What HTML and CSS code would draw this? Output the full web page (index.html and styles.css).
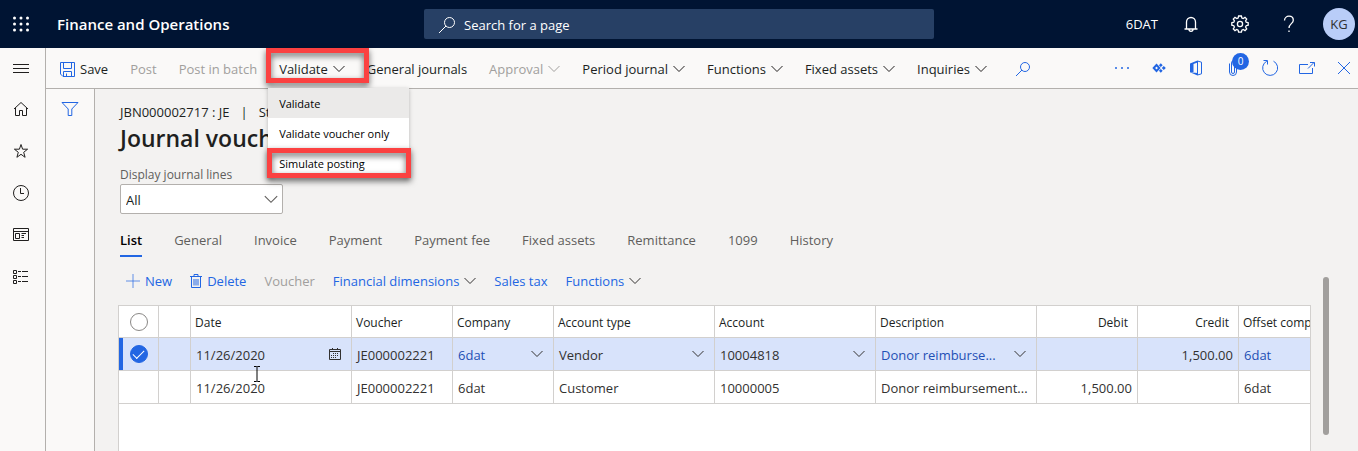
FILE: index.html
```html
<!DOCTYPE html>
<html lang="en">
<head>
<meta charset="utf-8">
<title>Journal voucher - Finance and Operations</title>
<link rel="stylesheet" href="styles.css">
</head>
<body>
<svg class="sprite" aria-hidden="true">
  <symbol id="chevron" viewBox="0 0 12 8"><path d="M.5 1 6 6.5 11.500 1"/></symbol>
</svg>

<header class="topbar">
  <div class="brand">
    <button class="icon-btn" aria-label="App launcher">
      <svg class="dots" width="16" height="16" viewBox="0 0 16 16"><circle cx="1.500" cy="2" r="1.500"/><circle cx="8" cy="2" r="1.500"/><circle cx="14.500" cy="2" r="1.500"/><circle cx="1.500" cy="8" r="1.500"/><circle cx="8" cy="8" r="1.500"/><circle cx="14.500" cy="8" r="1.500"/><circle cx="1.500" cy="14" r="1.500"/><circle cx="8" cy="14" r="1.500"/><circle cx="14.500" cy="14" r="1.500"/></svg>
    </button>
    <span class="brand-name">Finance and Operations</span>
  </div>
  <label class="search">
    <svg class="line" width="18" height="18" viewBox="0 0 18 18"><circle cx="11.500" cy="6.500" r="5"/><path d="M8 10 1 17"/></svg>
    <input type="search" placeholder="Search for a page" aria-label="Search for a page">
  </label>
  <div class="account">
    <span class="company">6DAT</span>
    <button class="icon-btn" aria-label="Notifications"><svg class="line strong" width="14" height="16" viewBox="0 0 14 16"><path d="M2.500 13V6a4.500 4.500 0 0 1 9 0v7M.5 13h13M5 13.500a2 1.800 0 0 0 4 0"/></svg></button>
    <button class="icon-btn" aria-label="Settings"><svg class="line strong" width="18" height="18" viewBox="0 0 18 18"><path d="m7.600 1 2.800 0 .5 2 1.300.5 1.800-1.100 1.700 1.700-1.100 1.800.6 1.300 2 .5v2.500l-2 .5-.6 1.300 1.100 1.900-1.700 1.700-1.800-1.100-1.300.6-.5 2H7.600l-.5-2-1.300-.6L4 15.600l-1.700-1.700 1.100-1.900-.6-1.300-2-.5V7.700l2-.5.6-1.300-1.100-1.800L4 2.400l1.800 1.100L7.100 3z"/><circle cx="9" cy="9" r="2.600"/></svg></button>
    <button class="icon-btn" aria-label="Help"><svg class="line strong" width="12" height="18" viewBox="0 0 12 18"><path d="M1.500 5.500A4.500 4.500 0 0 1 6 1.200c2.600 0 4.300 1.700 4.300 4C10.300 8.600 6 8.800 6 13M6 15.500v1.500"/></svg></button>
    <button class="avatar" aria-label="Account KG">KG</button>
  </div>
</header>

<div class="shell">
  <nav class="rail" aria-label="Navigation">
    <button class="icon-btn" aria-label="Expand navigation"><svg class="line" width="16" height="12" viewBox="0 0 16 12"><path d="M0 2.500h16M0 6.500h16M0 10.500h16"/></svg></button>
    <button class="icon-btn" aria-label="Home"><svg class="line" width="16" height="16" viewBox="0 0 16 16"><path d="M1 8 8 1.500 15 8M2.500 7v7.500h4v-5h3v5h4V7"/></svg></button>
    <button class="icon-btn" aria-label="Favorites"><svg class="line" width="16" height="16" viewBox="0 0 16 16"><path d="m8 1.500 1.600 4.700h5L10.700 9.300l1.400 5L8 11.300 3.900 14.300l1.400-5L1.400 6.200h5z"/></svg></button>
    <button class="icon-btn" aria-label="Recent"><svg class="line" width="16" height="16" viewBox="0 0 16 16"><circle cx="8" cy="8" r="7.500"/><path d="M7.500 3v5.500H11"/></svg></button>
    <button class="icon-btn" aria-label="Workspaces"><svg class="line" width="16" height="14" viewBox="0 0 16 14"><path d="M.5.500h15v12H.5zM.5 3.500h15M2.500 5.500h4v5h-4zM8.500 5.500H13M8.500 7.500H11M8.500 9.500H11"/></svg></button>
    <button class="icon-btn" aria-label="Modules"><svg class="line" width="16" height="14" viewBox="0 0 16 14"><path d="M.5.500h3v3h-3zM.5 5.500h3v3h-3zM.5 10.500h3v3h-3zM5 1.500h3M9 1.500h6M5 6.500h3M9 6.500h6M5 11.500h3M9 11.500h6"/></svg></button>
  </nav>

  <div class="workspace">
    <div class="toolbar" role="toolbar" aria-label="Actions">
      <button class="cmd"><svg class="line blue" width="15" height="15" viewBox="0 0 15 15"><path d="M.5.500h14v14H3L.5 12zM3.500.500v6h8v-6M3.500 14.500V9.500h8v5M6.500 11.500v3"/></svg>Save</button>
      <button class="cmd" disabled>Post</button>
      <button class="cmd" disabled>Post in batch</button>
      <div class="menu-host">
        <button class="cmd" aria-expanded="true">Validate<svg class="chev"><use href="#chevron"/></svg></button>
        <div class="callout callout-cmd"></div>
        <div class="menu" role="menu">
          <button class="menu-item current" role="menuitem">Validate</button>
          <button class="menu-item" role="menuitem">Validate voucher only</button>
          <button class="menu-item" role="menuitem">Simulate posting</button>
          <div class="callout callout-item"></div>
        </div>
      </div>
      <button class="cmd">General journals</button>
      <button class="cmd" disabled>Approval<svg class="chev"><use href="#chevron"/></svg></button>
      <button class="cmd">Period journal<svg class="chev"><use href="#chevron"/></svg></button>
      <button class="cmd">Functions<svg class="chev"><use href="#chevron"/></svg></button>
      <button class="cmd">Fixed assets<svg class="chev"><use href="#chevron"/></svg></button>
      <button class="cmd">Inquiries<svg class="chev"><use href="#chevron"/></svg></button>
      <button class="cmd find" aria-label="Find action"><svg class="line blue" width="16" height="16" viewBox="0 0 16 16"><circle cx="10" cy="6" r="4.500"/><path d="M7 9 1 15"/></svg></button>
      <div class="tools">
        <button class="icon-btn" aria-label="More"><svg class="dots blue" width="16" height="16" viewBox="0 0 16 16"><circle cx="2" cy="8" r="1"/><circle cx="8" cy="8" r="1"/><circle cx="14" cy="8" r="1"/></svg></button>
        <button class="icon-btn" aria-label="Power Apps"><svg class="line blue thick" width="14" height="10" viewBox="0 0 14 10"><path d="m4.500 2 2.800 3-2.800 3-2.800-3z"/><path class="solid" d="m8.800.3 1.900 1.900-1.900 1.900-1.900-1.900zM8.800 5.900l1.900 1.900-1.900 1.900-1.900-1.900zM11.800 3 13.800 5l-2 2-2-2z"/></svg></button>
        <button class="icon-btn" aria-label="Open in Office"><svg class="line blue" width="14" height="16" viewBox="0 0 14 16"><path d="M8.500 1 12.500 2.200v11.600L8.500 15"/><path class="solid" d="M8.500.500v2L4.500 4v8L1 12.500V3.500zM1 12.300l7.500.7v2.500z"/><path d="M8.500 1v14"/></svg></button>
        <button class="icon-btn" aria-label="Attachments, 0"><svg class="line blue" width="11" height="18" viewBox="0 0 11 18"><path d="M8.500 4v9a3.500 3.500 0 0 1-7 0V4.500M6.500 5v8a1.500 1.500 0 0 1-3 0V4a2.500 2.500 0 0 1 5 0"/></svg><span class="badge">0</span></button>
        <button class="icon-btn" aria-label="Refresh"><svg class="line blue" width="18" height="18" viewBox="0 0 18 18"><path d="M5.800 2.200a7.500 7.500 0 1 0 6.700 0M2.500 1.500h4v4"/></svg></button>
        <button class="icon-btn" aria-label="Open in new window"><svg class="line blue" width="16" height="14" viewBox="0 0 16 14"><path d="M9 3.500H.5v9h13V7M9 7.500l6-6M11 1.500h4.500v4"/></svg></button>
        <button class="icon-btn" aria-label="Close"><svg class="line blue" width="14" height="14" viewBox="0 0 14 14"><path d="m1 1 12 12M13 1 1 13"/></svg></button>
      </div>
    </div>

    <div class="body">
      <aside class="filter-pane">
        <button class="icon-btn" aria-label="Show filters"><svg class="line blue" width="18" height="16" viewBox="0 0 18 16"><path d="M1 1.500h16L10.800 8v6.500H7.200V8z"/></svg></button>
      </aside>
      <main class="page">
        <div class="content">
          <div class="crumbs"><span>JBN000002717 : JE</span><span>|</span><span>Standard view</span></div>
          <h1>Journal voucher</h1>
          <label class="field-label" for="lines">Display journal lines</label>
          <div class="select-box">
            <select id="lines"><option>All</option></select>
            <svg class="chev large"><use href="#chevron"/></svg>
          </div>
          <div class="tabs" role="tablist">
            <button class="tab active" role="tab" aria-selected="true">List</button>
            <button class="tab" role="tab">General</button>
            <button class="tab" role="tab">Invoice</button>
            <button class="tab" role="tab">Payment</button>
            <button class="tab" role="tab">Payment fee</button>
            <button class="tab" role="tab">Fixed assets</button>
            <button class="tab" role="tab">Remittance</button>
            <button class="tab" role="tab">1099</button>
            <button class="tab" role="tab">History</button>
          </div>
          <div class="actions">
            <button class="cmd link"><svg class="line blue thin" width="14" height="14" viewBox="0 0 14 14"><path d="M7 0v14M0 7h14"/></svg>New</button>
            <button class="cmd link"><svg class="line blue" width="12" height="14" viewBox="0 0 12 14"><path d="M0 2.500h12M4 2.500v-2h4v2M1.500 2.500v11h9v-11M4 5v6.500M6 5v6.500M8 5v6.500"/></svg>Delete</button>
            <button class="cmd" disabled>Voucher</button>
            <button class="cmd link">Financial dimensions<svg class="chev"><use href="#chevron"/></svg></button>
            <button class="cmd link">Sales tax</button>
            <button class="cmd link">Functions<svg class="chev"><use href="#chevron"/></svg></button>
          </div>
          <div class="grid">
            <table>
              <colgroup><col class="c-check"><col class="c-mark"><col class="c-wide"><col class="c-mid"><col class="c-mid"><col class="c-wide"><col class="c-wide"><col class="c-wide"><col class="c-mid"><col class="c-mid"><col class="c-mid"></colgroup>
              <thead>
                <tr>
                  <th class="check"><input type="checkbox" aria-label="Select all rows"></th>
                  <th></th><th>Date</th><th>Voucher</th><th>Company</th><th>Account type</th><th>Account</th><th>Description</th><th class="num">Debit</th><th class="num">Credit</th><th>Offset company</th>
                </tr>
              </thead>
              <tbody>
                <tr class="selected">
                  <td class="check"><input type="checkbox" checked aria-label="Select row 1"></td>
                  <td></td>
                  <td><div class="cell"><span>11/26/2020</span><button class="cell-btn calendar" aria-label="Pick a date"><svg class="line" width="12" height="12" viewBox="0 0 12 12"><path d="M.5 1.500h11v10H.5zM0 3.500h12M3.500 0v2M8.500 0v2"/><path class="days" d="M4 5.500h6M2 7.500h8M2 9.500h6"/></svg></button></div></td>
                  <td>JE000002221</td>
                  <td><div class="cell"><a href="#">6dat</a><button class="cell-btn" aria-label="Open company list"><svg class="chev"><use href="#chevron"/></svg></button></div></td>
                  <td><div class="cell"><span>Vendor</span><button class="cell-btn" aria-label="Open account type list"><svg class="chev"><use href="#chevron"/></svg></button></div></td>
                  <td><div class="cell"><span>10004818</span><button class="cell-btn" aria-label="Open account list"><svg class="chev"><use href="#chevron"/></svg></button></div></td>
                  <td><div class="cell"><a href="#">Donor reimburse...</a><button class="cell-btn" aria-label="Open description list"><svg class="chev"><use href="#chevron"/></svg></button></div></td>
                  <td class="num"></td>
                  <td class="num">1,500.00</td>
                  <td><a href="#">6dat</a></td>
                </tr>
                <tr>
                  <td class="check"></td>
                  <td></td>
                  <td>11/26/2020</td>
                  <td>JE000002221</td>
                  <td>6dat</td>
                  <td>Customer</td>
                  <td>10000005</td>
                  <td>Donor reimbursement...</td>
                  <td class="num">1,500.00</td>
                  <td class="num"></td>
                  <td>6dat</td>
                </tr>
              </tbody>
            </table>
            <svg class="pointer" width="8" height="16" viewBox="0 0 8 16"><path d="M1 .500h2.500L4 1l.5-.5H7M4 1v14M1 15.500h2.500L4 15l.5.500H7"/></svg>
          </div>
        </div>
        <div class="scroll-track"><div class="scroll-thumb"></div></div>
      </main>
    </div>
  </div>
</div>
</body>
</html>
```
FILE: styles.css
```css
* { box-sizing: border-box; }

body {
  margin: 0;
  height: 100vh;
  overflow: hidden;
  display: flex;
  flex-direction: column;
  background: #f3f2f1;
  color: #201f1e;
  font: 13px/20px "Open Sans", "Noto Sans", sans-serif;
}

button, input, select { font: inherit; color: inherit; }
button { border: 0; padding: 0; background: none; white-space: nowrap; }
a { color: #1f50b5; text-decoration: none; }

.sprite { position: absolute; width: 0; height: 0; }
.line { fill: none; stroke: currentColor; stroke-width: 1; flex: none; }
.strong { stroke-width: 1.3; }
.dots { fill: currentColor; }
.blue { color: #2266e3; }
.thick { stroke-width: 2; }
.thin { stroke-opacity: .7; }
.solid { fill: currentColor; stroke: none; }
.days { stroke-dasharray: 1 1; }
.chev { width: 12px; height: 8px; flex: none; fill: none; stroke: currentColor; stroke-width: 1; }
.chev.large { width: 14px; height: 9px; color: #605e5c; }
.icon-btn { display: flex; align-items: center; justify-content: center; position: relative; }

/* Top bar */
.topbar {
  flex: none;
  height: 48px;
  display: grid;
  grid-template-columns: 1fr 510px 1fr;
  align-items: center;
  background: #001433;
  color: #fff;
}
.brand { display: flex; align-items: center; gap: 28px; padding-left: 13px; }
.brand-name { font-size: 15px; font-weight: 600; }
.search {
  height: 30px;
  display: flex;
  align-items: center;
  gap: 8px;
  padding: 2px 14px 0;
  border-radius: 2px;
  background: #274065;
}
.search input { flex: 1; border: 0; padding: 0; background: none; outline: 0; }
.search input::placeholder { color: #fff; opacity: 1; }
.account { display: flex; align-items: center; justify-content: flex-end; padding-right: 3px; }
.account .company { margin-right: 8px; }
.account .icon-btn { width: 49px; height: 48px; }
.avatar {
  width: 32px;
  height: 32px;
  margin-left: 10px;
  border-radius: 50%;
  background: #b9cdf8;
  color: #303030;
}

/* Left rail */
.shell { flex: 1; min-height: 0; display: flex; }
.rail { flex: none; width: 46px; border-right: 1px solid #b3b0ad; background: #faf9f8; padding-right: 3px; }
.rail .icon-btn { width: 100%; height: 42px; }
.rail .icon-btn:first-child { height: 40px; }

.workspace { flex: 1; min-width: 0; display: flex; flex-direction: column; }

/* Command bar */
.toolbar {
  flex: none;
  height: 41px;
  display: flex;
  align-items: center;
  gap: 22px;
  padding: 2px 5px 0 14px;
  border-bottom: 1px solid #b3b0ad;
  background: #faf9f8;
}
.cmd { display: flex; align-items: center; gap: 5px; line-height: 20px; }
.cmd:disabled { color: #a19f9d; }
.cmd.link { color: #2266e3; }
.cmd.link .chev { color: #323130; }
.find { margin-left: 6px; }
.tools { margin-left: auto; display: flex; align-items: center; gap: 19px; padding-bottom: 2px; }
.tools .icon-btn { width: 18px; height: 18px; }
.badge {
  position: absolute;
  left: 8px;
  top: -6px;
  width: 17px;
  height: 17px;
  border-radius: 50%;
  background: #2266e3;
  color: #fff;
  font-size: 10px;
  line-height: 17px;
  text-align: center;
}

.menu-host { position: relative; z-index: 2; }
.menu {
  position: absolute;
  top: 29px;
  left: -11px;
  width: 141px;
  background: #fff;
  box-shadow: 0 1px 4px rgba(0, 0, 0, .25);
}
.menu-item { display: block; width: 100%; height: 30px; padding: 2px 11px 0; text-align: left; font-size: 11px; color: #000; }
.menu-item.current { background: #ebeae9; }
.callout {
  position: absolute;
  border: 5px solid #fb4141;
  pointer-events: none;
  filter: drop-shadow(0 3px 3px rgba(0, 0, 0, .6));
}
.callout-cmd { left: -13px; right: -24px; top: -11px; height: 35px; }
.callout-item { left: -1px; right: -2px; bottom: 0; height: 30px; }

/* Page */
.body { flex: 1; min-height: 0; display: flex; }
.filter-pane { flex: none; width: 49px; border-right: 1px solid #b3b0ad; background: #faf9f8; }
.filter-pane .icon-btn { width: 100%; height: 40px; }
.page { flex: 1; min-width: 0; display: flex; padding-left: 23px; }
.content { flex: 1; min-width: 0; display: flex; flex-direction: column; padding-top: 13px; }
.crumbs { display: flex; gap: 11px; padding-left: 2px; white-space: nowrap; }
h1 { margin: 0; padding-left: 2px; font-size: 23px; line-height: 32px; font-weight: 600; }
.field-label { margin-top: 11px; padding-left: 2px; font-size: 12px; line-height: 20px; color: #605e5c; }
.select-box { position: relative; width: 163px; margin: -1px 0 0 2px; }
.select-box select {
  appearance: none;
  display: block;
  width: 100%;
  height: 30px;
  padding: 2px 5px 0;
  border: 1px solid #b3b0ad;
  border-radius: 2px;
  background: #fff;
}
.select-box .chev { position: absolute; right: 5px; top: 11px; pointer-events: none; }

.tabs { display: flex; gap: 32px; margin-top: 14px; padding-left: 2px; }
.tab { height: 29px; padding-bottom: 3px; border-bottom: 2px solid transparent; color: #605e5c; }
.tab.active { color: #000; font-weight: 600; border-color: #2266e3; }

.actions { display: flex; align-items: center; gap: 18px; height: 48px; padding-left: 8px; }

/* Journal lines */
.grid {
  position: relative;
  flex: 1;
  min-height: 0;
  overflow: hidden;
  border: 1px solid #d2d0ce;
  border-bottom: 0;
  background: #fff;
}
table { width: 1221px; table-layout: fixed; border-collapse: separate; border-spacing: 0; }
.c-check { width: 40px; }
.c-mark { width: 32px; }
.c-mid { width: 101px; }
.c-wide { width: 161px; }
th, td {
  height: 33px;
  padding: 0 5px;
  border-right: 1px solid #d2d0ce;
  border-bottom: 1px solid #d2d0ce;
  text-align: left;
  white-space: nowrap;
  overflow: hidden;
}
th { height: 32px; padding: 2px 5px 0 4px; font-size: 12px; font-weight: 400; color: #201f1e; }
td { padding-top: 2px; color: #323130; }
th.num { text-align: right; padding-right: 9px; }
td.num { text-align: right; }
th.check, td.check { padding: 0; text-align: center; }
.check input {
  appearance: none;
  display: block;
  width: 18px;
  height: 18px;
  margin: 0 auto;
  border: 1px solid #8a8886;
  border-radius: 50%;
  background: #fff;
}
.check input:checked {
  border-color: #2266e3;
  background: #2266e3;
  display: grid;
  place-items: center;
}
.check input:checked::after {
  content: "";
  width: 10px;
  height: 5px;
  margin-bottom: 3px;
  border: solid #fff;
  border-width: 0 0 1px 1px;
  transform: rotate(-45deg);
}
.selected td { background: #d8e3fb; }
.selected .check { box-shadow: inset 4px 0 #2266e3; }
.cell { display: flex; align-items: center; justify-content: space-between; }
.cell-btn { display: flex; padding: 0 5px 2px 0; }
.pointer { position: absolute; left: 134px; top: 60px; fill: none; stroke: #000; }

.scroll-track { flex: none; width: 47px; padding: 188px 0 0 12px; }
.scroll-thumb { width: 6px; height: 158px; border-radius: 3px; background: #a19f9d; }
```
